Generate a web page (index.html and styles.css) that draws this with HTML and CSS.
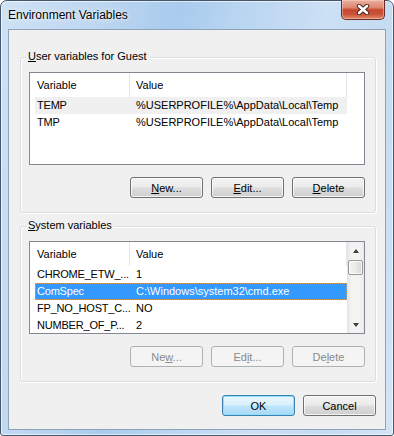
FILE: index.html
```html
<!DOCTYPE html>
<html lang="en">
<head>
  <meta charset="UTF-8">
  <title>Environment Variables</title>
  <link rel="stylesheet" href="styles.css">
</head>
<body>
  <div class="window">
    <div class="titlebar">
      <span class="title">Environment Variables</span>
      <button class="close" title="Close">
        <svg width="14" height="11" viewBox="0 0 14 11">
          <path d="M3 2 L11 9 M11 2 L3 9" stroke="#4b2019" stroke-width="4.4" stroke-linecap="round"/>
          <path d="M3 2 L11 9 M11 2 L3 9" stroke="#fff" stroke-width="2.6" stroke-linecap="round"/>
        </svg>
      </button>
    </div>

    <div class="client">
      <!-- user variables -->
      <div class="group first">
        <span class="group-title"><u>U</u>ser variables for Guest</span>
        <div class="list">
          <div class="list-body">
            <div class="list-head">
              <span class="head-cell name">Variable</span>
              <span class="head-cell value">Value</span>
            </div>
            <div class="row inactive">
              <span class="c-name">TEMP</span>
              <span class="c-value">%USERPROFILE%\AppData\Local\Temp</span>
            </div>
            <div class="row">
              <span class="c-name">TMP</span>
              <span class="c-value">%USERPROFILE%\AppData\Local\Temp</span>
            </div>
          </div>
        </div>
        <div class="actions">
          <button class="btn"><u>N</u>ew...</button>
          <button class="btn"><u>E</u>dit...</button>
          <button class="btn"><u>D</u>elete</button>
        </div>
      </div>

      <!-- system variables -->
      <div class="group second">
        <span class="group-title"><u>S</u>ystem variables</span>
        <div class="list">
          <div class="list-body">
            <div class="list-head">
              <span class="head-cell name">Variable</span>
              <span class="head-cell value">Value</span>
            </div>
            <div class="row">
              <span class="c-name">CHROME_ETW_...</span>
              <span class="c-value">1</span>
            </div>
            <div class="row selected">
              <span class="c-name">ComSpec</span>
              <span class="c-value">C:\Windows\system32\cmd.exe</span>
            </div>
            <div class="row">
              <span class="c-name">FP_NO_HOST_C...</span>
              <span class="c-value">NO</span>
            </div>
            <div class="row">
              <span class="c-name">NUMBER_OF_P...</span>
              <span class="c-value">2</span>
            </div>
          </div>
          <div class="scrollbar">
            <div class="arrow up"></div>
            <div class="thumb"></div>
            <div class="track"></div>
            <div class="arrow down"></div>
          </div>
        </div>
        <div class="actions">
          <button class="btn" disabled>Ne<u>w</u>...</button>
          <button class="btn" disabled>Ed<u>i</u>t...</button>
          <button class="btn" disabled>De<u>l</u>ete</button>
        </div>
      </div>

      <div class="footer">
        <button class="btn default">OK</button>
        <button class="btn">Cancel</button>
      </div>
    </div>
  </div>
</body>
</html>
```

FILE: styles.css
```css
body {
  margin: 0;
  background: #fff;
  font-family: "Liberation Sans", Arial, sans-serif;
  font-size: 12px;
  color: #000;
}
.window {
  width: 394px;
  height: 436px;
  box-sizing: border-box;
  border: 1px solid #46576a;
  border-radius: 7px 7px 3px 3px;
  background:
    linear-gradient(100deg, #cfe2f6 0%, #bfd7f1 20%, #a9cbee 38%, #b7d4f1 50%, #cde0f5 70%, #c4dbf3 85%, #d4e5f6 100%);
  box-shadow: inset 0 0 0 1px rgba(255,255,255,0.6);
  display: flex;
  flex-direction: column;
}
.titlebar {
  height: 28px;
  display: flex;
  justify-content: space-between;
  align-items: flex-start;
  padding: 0 8px 0 7px;
}
.title {
  line-height: 28px;
  color: #000;
  text-shadow: 0 0 6px rgba(255,255,255,0.9), 0 0 2px rgba(255,255,255,0.9);
}
.close {
  margin-top: -1px;
  width: 44px;
  height: 20px;
  padding: 0;
  border: 1px solid #6b2a20;
  border-top: none;
  border-radius: 0 0 5px 5px;
  background: linear-gradient(#eab0a2 0%, #dd8670 40%, #c5472d 52%, #c9533a 75%, #e08a6c 100%);
  box-shadow: inset 0 0 0 1px rgba(255,220,210,0.45);
  display: flex;
  align-items: center;
  justify-content: center;
}
.client {
  flex: 1;
  margin: 0 7px 5px;
  border: 1px solid #8ea2b8;
  background: #f0f0f0;
  padding: 0 9px 0 11px;
  display: flex;
  flex-direction: column;
  font-size: 11px;
}
.group {
  position: relative;
  border: 1px solid #d5dfe5;
  border-radius: 3px;
  padding: 14px 9px 14px 8px;
  box-shadow: 1px 1px 0 #fff, inset 1px 1px 0 #fff;
}
.group.first {
  margin-top: 27px;
}
.group.second {
  margin-top: 13px;
}
.group-title {
  position: absolute;
  top: -9px;
  left: 5px;
  padding: 0 2px;
  line-height: 15px;
  background: #f0f0f0;
}
.list {
  width: 336px;
  height: 93px;
  box-sizing: border-box;
  border: 1px solid #828790;
  background: #fff;
  overflow: hidden;
  display: flex;
}
.list-body {
  flex: 1;
  overflow: hidden;
}
.list-head {
  display: flex;
  height: 24px;
  line-height: 24px;
}
.head-cell {
  box-sizing: border-box;
  border-right: 1px solid #e3e5e8;
}
.head-cell.name {
  width: 100px;
  padding-left: 7px;
}
.head-cell.value {
  width: 217px;
  padding-left: 6px;
}
.row {
  display: flex;
  height: 17px;
  line-height: 17px;
  margin-left: 5px;
  width: 312px;
  white-space: nowrap;
}
.c-name {
  width: 95px;
  flex-shrink: 0;
  padding-left: 2px;
  box-sizing: border-box;
  letter-spacing: -0.2px;
}
.c-value {
  flex: 1;
  padding-left: 6px;
  overflow: hidden;
}
.row.inactive {
  background: #f0f0f0;
}
.row.selected {
  background: #3399ff;
  color: #fff;
  outline: 1px dotted #d9a060;
  outline-offset: -1px;
}
.scrollbar {
  width: 17px;
  display: flex;
  flex-direction: column;
  align-items: center;
  background: linear-gradient(90deg, #e4e4e4 0%, #f3f3f3 25%, #f3f3f3 75%, #eaeaea 100%);
}
.arrow {
  width: 17px;
  height: 17px;
  display: flex;
  align-items: center;
  justify-content: center;
}
.arrow::before {
  content: "";
  border-left: 3.5px solid transparent;
  border-right: 3.5px solid transparent;
}
.arrow.up::before {
  border-bottom: 4px solid #3d3d3d;
}
.arrow.down::before {
  border-top: 4px solid #3d3d3d;
}
.thumb {
  margin-top: 1px;
  width: 15px;
  height: 15px;
  box-sizing: border-box;
  border: 1px solid #979797;
  border-radius: 2px;
  background: linear-gradient(90deg, #f4f4f4 0%, #e9e9e9 50%, #d6d6d6 100%);
  box-shadow: inset 0 0 0 1px #fbfbfb;
}
.track {
  flex: 1;
}
.actions {
  display: flex;
  justify-content: flex-end;
  gap: 8px;
  margin-top: 12px;
  padding-right: 1px;
}
.btn {
  width: 73px;
  height: 21px;
  box-sizing: border-box;
  padding: 0;
  border: 1px solid #707070;
  border-radius: 3px;
  background: linear-gradient(#f2f2f2 0%, #ebebeb 48%, #dddddd 52%, #cfcfcf 100%);
  box-shadow: inset 0 0 0 1px rgba(255,255,255,0.75);
  font: inherit;
  color: #000;
}
.btn:disabled {
  border-color: #adb2b5;
  background: #f4f4f4;
  box-shadow: none;
  color: #8a8a8a;
}
.btn.default {
  border-color: #3c7fb1;
  background: linear-gradient(#eaf6fd 0%, #d9f0fc 48%, #bee6fd 52%, #a7d9f5 100%);
  box-shadow: inset 0 0 0 1px #8fe0fb;
}
.footer {
  display: flex;
  justify-content: flex-end;
  gap: 8px;
  margin-top: 13px;
}
```
